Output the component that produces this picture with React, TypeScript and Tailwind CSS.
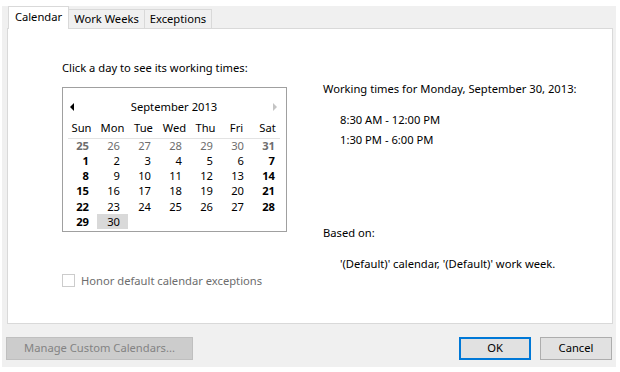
import React from "react";

const FONT = { fontFamily: '"Noto Sans", "Liberation Sans", sans-serif' };

type Day = { n: number; muted?: boolean; selected?: boolean };

const weeks: Day[][] = [
  [25, 26, 27, 28, 29, 30, 31].map((n) => ({ n, muted: true })),
  [1, 2, 3, 4, 5, 6, 7].map((n) => ({ n })),
  [8, 9, 10, 11, 12, 13, 14].map((n) => ({ n })),
  [15, 16, 17, 18, 19, 20, 21].map((n) => ({ n })),
  [22, 23, 24, 25, 26, 27, 28].map((n) => ({ n })),
  [{ n: 29 }, { n: 30, selected: true }],
];

const dayNames = ["Sun", "Mon", "Tue", "Wed", "Thu", "Fri", "Sat"];

const MonthCalendar = () => {
  return (
    <div className="w-[225px] h-[145px] border border-[#a0a0a0] bg-white">
      <div className="flex items-center h-[16px] mt-[11px] px-[6px]">
        <svg width="5" height="8" viewBox="0 0 5 8" className="ml-[1px]">
          <path d="M4 0 L0 4 L4 8 Z" fill="#000" />
        </svg>
        <div className="flex-1 text-center leading-[16px] text-black">September 2013</div>
        <svg width="5" height="8" viewBox="0 0 5 8" className="mr-[2px]">
          <path d="M0 0 L4 4 L0 8 Z" fill="#c4c4c4" />
        </svg>
      </div>
      <div className="ml-[3px] mt-[5px] w-[217px]">
        <div className="grid grid-cols-7 h-[15px] leading-[15px] text-black">
          {dayNames.map((d) => (
            <div key={d} className="text-center">
              {d}
            </div>
          ))}
        </div>
        <div className="ml-[2px] mr-[3px] mt-[3px] h-px bg-[#e3e3e3]" />
        <div className="mt-[-1px]">
          {weeks.map((week, wi) => (
            <div
              key={wi}
              className={"grid grid-cols-7 leading-[15px] " + (wi === 3 ? "h-[16px]" : "h-[15px]")}
            >
              {week.map((d, di) => {
                const bold = di === 0 || di === 6;
                return (
                  <div
                    key={di}
                    className={
                      "text-right pr-[8px] " +
                      (bold ? "font-bold " : "") +
                      (d.muted ? "text-[#6d6d6d] " : "text-black ") +
                      (d.selected ? "bg-[#d9d9d9]" : "")
                    }
                  >
                    {d.n}
                  </div>
                );
              })}
            </div>
          ))}
        </div>
      </div>
    </div>
  );
};

export default function App() {
  return (
    <div className="w-[620px] h-[372px] bg-white overflow-hidden text-[11.2px]" style={FONT}>
      <div className="mt-[6px] ml-[2px] w-[614px] h-[361px] bg-[#f0f0f0]">
        <div className="flex items-end h-[22px] pl-[6px]">
          <div className="relative z-10 -mb-px h-[23px] w-[61px] border border-b-0 border-[#d9d9d9] bg-white leading-[20px] text-center text-black">
            Calendar
          </div>
          <div className="h-[19px] w-[76px] border border-l-0 border-b-0 border-[#d9d9d9] leading-[17px] text-center text-black">
            Work Weeks
          </div>
          <div className="h-[19px] w-[67px] border border-l-0 border-b-0 border-[#d9d9d9] leading-[17px] text-center text-black">
            Exceptions
          </div>
        </div>

        <div className="ml-[5px] w-[606px] h-[296px] border border-[#d9d9d9] bg-white flex text-black">
          <div className="ml-[54px] w-[261px] pt-[31px] flex flex-col">
            <div className="leading-[15px]">Click a day to see its working times:</div>
            <div className="mt-[12px]">
              <MonthCalendar />
            </div>
            <label className="mt-[41px] flex items-center gap-[6px] text-[#6d6d6d]">
              <span className="w-[13px] h-[13px] border border-[#cccccc] bg-white" />
              <span className="leading-[15px]">Honor default calendar exceptions</span>
            </label>
          </div>
          <div className="pt-[52px] flex flex-col leading-[15px]">
            <div>Working times for Monday, September 30, 2013:</div>
            <div className="ml-[17px] mt-[16px]">8:30 AM - 12:00 PM</div>
            <div className="ml-[17px] mt-[5px]">1:30 PM - 6:00 PM</div>
            <div className="mt-[78px]">Based on:</div>
            <div className="ml-[17px] mt-[16px]">'(Default)' calendar, '(Default)' work week.</div>
          </div>
        </div>

        <div className="flex items-center mt-[13px]">
          <button className="ml-[4px] w-[187px] h-[23px] border border-[#bfbfbf] bg-[#cccccc] text-[#838383]">
            Manage Custom Calendars...
          </button>
          <button className="ml-auto w-[72px] h-[23px] border-2 border-[#0078d7] bg-[#e1e1e1] text-black">
            OK
          </button>
          <button className="ml-[9px] mr-[4px] w-[72px] h-[23px] border border-[#adadad] bg-[#e1e1e1] text-black">
            Cancel
          </button>
        </div>
      </div>
    </div>
  );
}
